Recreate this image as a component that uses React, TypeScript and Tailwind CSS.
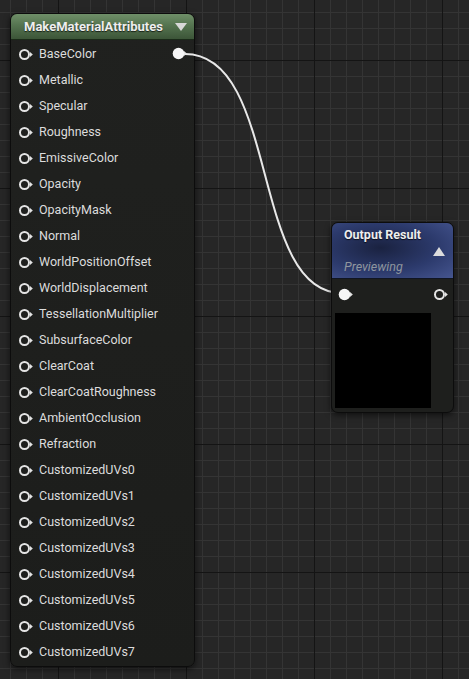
import React from "react";

const inputs = [
  "BaseColor","Metallic","Specular","Roughness","EmissiveColor","Opacity","OpacityMask","Normal",
  "WorldPositionOffset","WorldDisplacement","TessellationMultiplier","SubsurfaceColor","ClearCoat",
  "ClearCoatRoughness","AmbientOcclusion","Refraction","CustomizedUVs0","CustomizedUVs1","CustomizedUVs2",
  "CustomizedUVs3","CustomizedUVs4","CustomizedUVs5","CustomizedUVs6","CustomizedUVs7",
];

function Pin({ filled }: { filled?: boolean }) {
  return (
    <svg width="15" height="13" viewBox="0 0 15 13" className="shrink-0">
      {filled ? (
        <circle cx="6.5" cy="6.5" r="5.8" fill="#f6f6f6" />
      ) : (
        <circle cx="6.5" cy="6.5" r="4.5" fill="none" stroke="#e4e4e4" strokeWidth="2" />
      )}
      <path d="M12 4 L14.8 6.5 L12 9 Z" fill="#e4e4e4" />
    </svg>
  );
}

function Grid() {
  const W = 469, H = 679;
  const minorV: number[] = [], minorH: number[] = [], majorV: number[] = [], majorH: number[] = [];
  for (let x = 10; x < W; x += 16) ((x - 58) % 128 === 0 ? majorV : minorV).push(x);
  for (let y = 12; y < H; y += 16) ((y - 60) % 128 === 0 ? majorH : minorH).push(y);
  return (
    <svg width={W} height={H} className="absolute inset-0">
      <rect width={W} height={H} fill="#262626" />
      {minorV.map((x) => <line key={"v" + x} x1={x + 0.5} y1={0} x2={x + 0.5} y2={H} stroke="#343434" strokeWidth="1" />)}
      {minorH.map((y) => <line key={"h" + y} x1={0} y1={y + 0.5} x2={W} y2={y + 0.5} stroke="#343434" strokeWidth="1" />)}
      {majorV.map((x) => <line key={"V" + x} x1={x + 0.5} y1={0} x2={x + 0.5} y2={H} stroke="#141414" strokeWidth="1" />)}
      {majorH.map((y) => <line key={"H" + y} x1={0} y1={y + 0.5} x2={W} y2={y + 0.5} stroke="#141414" strokeWidth="1" />)}
    </svg>
  );
}

export default function App() {
  return (
    <div className="relative w-[469px] h-[679px] overflow-hidden bg-[#262626] font-['Roboto','Liberation_Sans',sans-serif]">
      <Grid />

      {/* MakeMaterialAttributes node */}
      <div className="absolute left-[10px] top-[13px] w-[185px] h-[654px] rounded-[7px] border border-[#0c0c0c] bg-[linear-gradient(180deg,#20211f,#1c1d1b)] shadow-[0_2px_6px_rgba(0,0,0,0.6)] flex flex-col overflow-hidden">
        <div className="h-[26px] shrink-0 flex items-center justify-between pl-[13px] pr-[6px] bg-[linear-gradient(180deg,#6f8f68_0%,#557450_45%,#3c5538_100%)] border-b border-[#1a2a18]">
          <span className="text-[13px] font-bold text-[#eeeeee] leading-none [text-shadow:0_1px_1px_rgba(0,0,0,0.7)]">MakeMaterialAttributes</span>
          <svg width="14" height="10" viewBox="0 0 14 10"><path d="M1 1 L13 1 L7 9 Z" fill="#d8d8d8" /></svg>
        </div>
        <div className="flex flex-col pt-[1px]">
          {inputs.map((name, i) => (
            <div key={name} className="h-[26px] flex items-center pl-[7px] pr-[6px] relative">
              <Pin />
              <span className="ml-[6px] text-[12.5px] text-[#dcdcdc] leading-none">{name}</span>
              {i === 0 && (
                <span className="absolute right-[7px] top-[6px]"><Pin filled /></span>
              )}
            </div>
          ))}
        </div>
      </div>

      {/* Wire */}
      <svg width="469" height="679" className="absolute inset-0 pointer-events-none">
        <path d="M185 54 C 280 54, 250 293, 342 293" fill="none" stroke="#e8e8e8" strokeWidth="2" strokeLinecap="round" />
      </svg>

      {/* Output Result node */}
      <div className="absolute left-[331px] top-[222px] w-[123px] h-[191px] rounded-[7px] border border-[#0c0c0c] bg-[#1e1f1d] shadow-[0_2px_6px_rgba(0,0,0,0.6)] flex flex-col overflow-hidden">
        <div className="relative h-[56px] shrink-0 bg-[radial-gradient(ellipse_at_40%_45%,#1a2240_0%,#2c3a6c_55%,#45558f_100%)] border-b border-[#101522]">
          <div className="pl-[12px] pt-[5px] text-[12.5px] font-bold text-[#eeeeee] leading-[14px] [text-shadow:0_1px_1px_rgba(0,0,0,0.7)]">Output Result</div>
          <svg width="12" height="9" viewBox="0 0 12 9" className="absolute right-[8px] top-[24px]"><path d="M0 9 L12 9 L6 0 Z" fill="#dcdcdc" /></svg>
          <div className="absolute left-[12px] top-[38px] text-[12.5px] italic text-[#8f969e] leading-none">Previewing</div>
        </div>
        <div className="h-[30px] flex items-center justify-between pl-[6px] pr-[5px]">
          <Pin filled />
          <Pin />
        </div>
        <div className="ml-[3px] mt-[4px] w-[96px] h-[95px] bg-black" />
      </div>
    </div>
  );
}
